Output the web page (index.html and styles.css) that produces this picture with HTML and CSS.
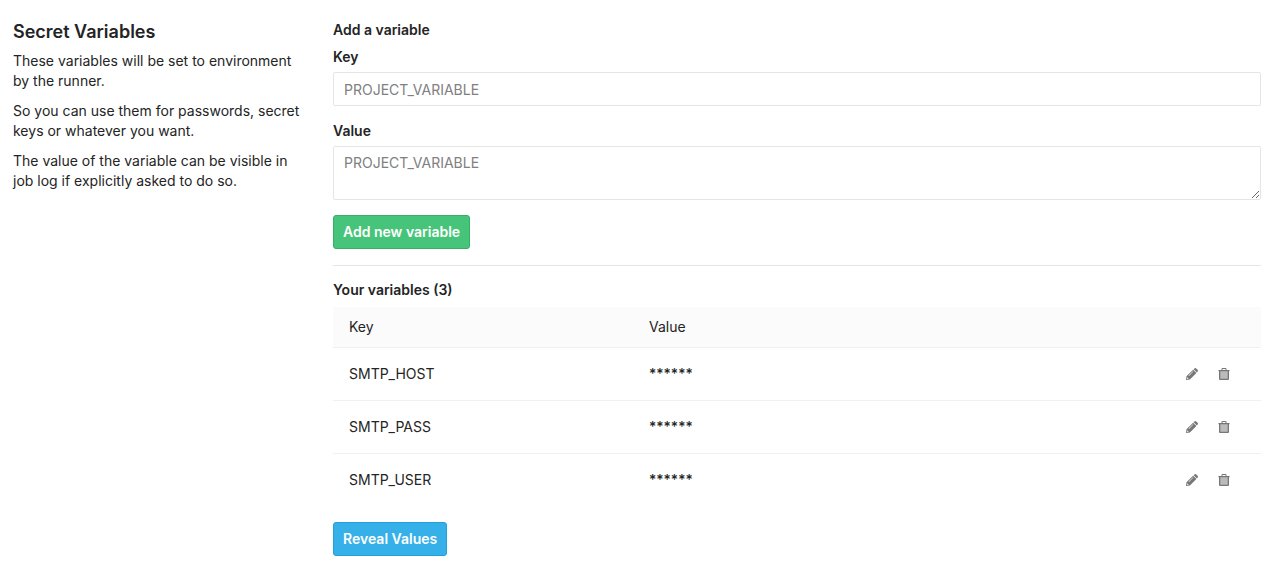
FILE: index.html
```html
<!DOCTYPE html>
<html lang="en">
<head>
<meta charset="utf-8">
<title>Secret Variables</title>
<link rel="stylesheet" href="styles.css">
</head>
<body>
<svg class="sprite" aria-hidden="true">
  <symbol id="pencil" viewBox="0 0 12 12">
    <path fill-rule="evenodd" d="M7.100 1.700 10.400 5 3.900 11.500 0 12 .5 8.300zM1.300 9.300 1.100 10.400 1.700 10.900 2.700 10.700zM6.900 3.200 2.600 7.500 3 7.900 7.300 3.600z"/>
    <path d="M7.600 1.200 8.400.4Q9.300-.3 10.200.4L11.600 1.800Q12.300 2.700 11.600 3.600L10.900 4.500z"/>
  </symbol>
  <symbol id="trash" viewBox="0 0 12 12">
    <path opacity=".5" d="M2 3h8v8H2z"/>
    <path fill-rule="evenodd" d="M3.500 2V1Q3.500 0 4.500 0h3Q8.500 0 8.500 1v1H11.500v1.300h-.5V11q0 1-1 1H2q-1 0-1-1V3.300H.5V2zM4.500 2h3V1h-3zM2.300 3.300V10.800h7.400V3.300z"/>
  </symbol>
</svg>
<main class="settings">
  <aside class="intro">
    <h1 class="title">Secret Variables</h1>
    <p>These variables will be set to environment by the runner.</p>
    <p>So you can use them for passwords, secret keys or whatever you want.</p>
    <p>The value of the variable can be visible in job log if explicitly asked to do so.</p>
  </aside>
  <div class="content">
    <section class="add">
      <h2 class="subtitle">Add a variable</h2>
      <form>
        <div class="group">
          <label class="label" for="key">Key</label>
          <input class="control" id="key" type="text" placeholder="PROJECT_VARIABLE">
        </div>
        <div class="group">
          <label class="label" for="value">Value</label>
          <textarea class="control area" id="value" placeholder="PROJECT_VARIABLE"></textarea>
        </div>
        <button class="btn btn-create" type="button">Add new variable</button>
      </form>
    </section>
    <section class="list">
      <h2 class="subtitle">Your variables (3)</h2>
      <table class="table">
        <thead>
          <tr><th class="col-key" scope="col">Key</th><th scope="col">Value</th><th class="col-actions" aria-label="Actions"></th></tr>
        </thead>
        <tbody>
          <tr>
            <td>SMTP_HOST</td><td class="secret">******</td>
            <td><div class="actions"><a href="#" aria-label="Edit"><svg class="icon"><use href="#pencil"/></svg></a><a href="#" aria-label="Remove"><svg class="icon"><use href="#trash"/></svg></a></div></td>
          </tr>
          <tr>
            <td>SMTP_PASS</td><td class="secret">******</td>
            <td><div class="actions"><a href="#" aria-label="Edit"><svg class="icon"><use href="#pencil"/></svg></a><a href="#" aria-label="Remove"><svg class="icon"><use href="#trash"/></svg></a></div></td>
          </tr>
          <tr>
            <td>SMTP_USER</td><td class="secret">******</td>
            <td><div class="actions"><a href="#" aria-label="Edit"><svg class="icon"><use href="#pencil"/></svg></a><a href="#" aria-label="Remove"><svg class="icon"><use href="#trash"/></svg></a></div></td>
          </tr>
        </tbody>
      </table>
      <button class="btn btn-info" type="button">Reveal Values</button>
    </section>
  </div>
</main>
</body>
</html>
```
FILE: styles.css
```css
* { box-sizing: border-box; }
body {
  margin: 0;
  background: #fff;
  color: #242424;
  font: 14px/20px Inter, "Liberation Sans", sans-serif;
}
.sprite { display: none; }
.settings {
  display: flex;
  gap: 32px;
  padding: 20px 17px 8px 13px;
}
.intro { flex: 0 0 calc(25% - 24px); }
.title {
  margin: 0 0 7px;
  font-size: 18px;
  line-height: 24px;
  font-weight: 600;
}
.intro p { margin: 0 0 10px; }
.content { flex: 1; min-width: 0; }
.subtitle {
  margin: 0 0 7px;
  font-size: 14px;
  line-height: 20px;
  font-weight: 600;
}
.group { margin-bottom: 15px; }
.label {
  display: block;
  margin-bottom: 5px;
  font-weight: 600;
}
.control {
  display: block;
  width: 100%;
  height: 34px;
  padding: 6px 10px;
  border: 1px solid #e5e5e5;
  border-radius: 2px;
  background: #fff;
  color: #5c5c5c;
  font: inherit;
}
.control::placeholder { color: #808080; }
.area { height: 54px; resize: vertical; }
.btn {
  display: block;
  height: 34px;
  padding: 6px 9px;
  border: 1px solid;
  border-radius: 3px;
  color: #fff;
  font: inherit;
  font-weight: 600;
}
.btn-create { background: #46c57a; border-color: #38ae67; }
.btn-info { background: #36b0e8; border-color: #22a0da; }
.list {
  margin-top: 16px;
  padding-top: 14px;
  border-top: 1px solid #e5e5e5;
}
.table {
  width: 100%;
  margin-bottom: 15px;
  border-collapse: separate;
  border-spacing: 0;
  table-layout: fixed;
}
.table th {
  height: 41px;
  padding: 10px 16px;
  background: #fbfbfb;
  border-bottom: 1px solid #f0f0f0;
  font-weight: 400;
  text-align: left;
}
.table td {
  height: 53px;
  padding: 16px;
  border-bottom: 1px solid #f0f0f0;
}
.table tbody tr:last-child td { border-bottom-color: transparent; }
.col-key { width: 300px; }
.col-actions { width: 140px; }
.table .secret { font-weight: 500; }
.actions {
  display: flex;
  justify-content: flex-end;
  gap: 20px;
  padding-right: 15px;
  color: #777;
}
.actions a { color: inherit; }
.icon { display: block; width: 12px; height: 12px; fill: currentColor; }
```
